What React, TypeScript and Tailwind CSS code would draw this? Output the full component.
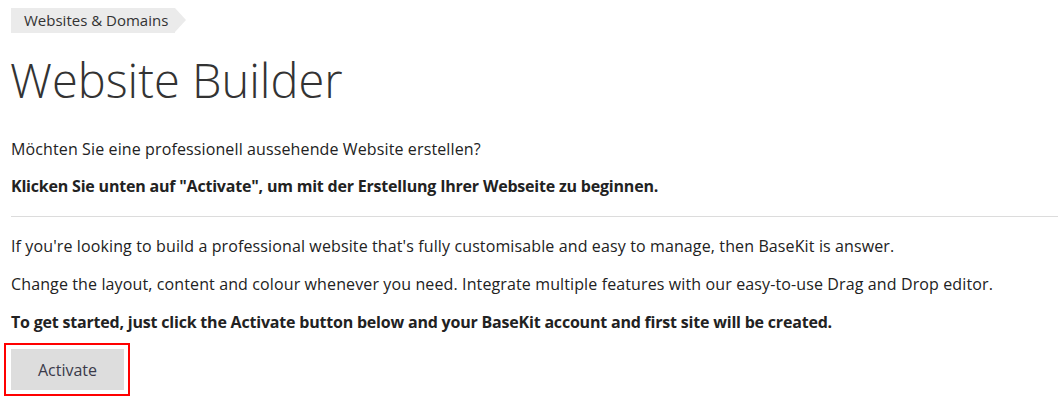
export default function App() {
    return (
        <div className="min-h-screen bg-white px-[11px] text-[16px] tracking-[0.12px] text-[#222] font-['Open_Sans',sans-serif]">
            {/* Breadcrumb */}
            <div className="pt-[8px] flex tracking-normal">
                <div className="flex h-[25px] items-center bg-[#ebebeb] pl-[13px] pr-[7px] text-[15px] text-[#333]">
                    Websites &amp; Domains
                </div>
                <div className="h-0 w-0 border-y-[12.5px] border-l-[11px] border-y-transparent border-l-[#ebebeb]" />
            </div>

            <h1 className="mt-[19px] text-[47px] leading-[56px] font-light tracking-normal text-[#333] -ml-[1px]">Website Builder</h1>

            <p className="mt-[31px] leading-[20px]">Möchten Sie eine professionell aussehende Website erstellen?</p>
            <p className="mt-[17px] leading-[20px] font-bold tracking-[-0.2px]">
                Klicken Sie unten auf "Activate", um mit der Erstellung Ihrer Webseite zu beginnen.
            </p>

            <hr className="mt-[20px] border-t border-[#dcdcdc] -mr-[11px]" />

            <p className="mt-[19px] leading-[20px]">
                If you're looking to build a professional website that's fully customisable and easy to manage, then BaseKit is answer.
            </p>
            <p className="mt-[18px] leading-[20px]">
                Change the layout, content and colour whenever you need. Integrate multiple features with our easy-to-use Drag and Drop editor.
            </p>
            <p className="mt-[18px] leading-[20px] font-bold tracking-[-0.2px]">
                To get started, just click the Activate button below and your BaseKit account and first site will be created.
            </p>

            <div className="mt-[11px] -ml-[7px] inline-flex border-2 border-[#ff0000] pl-[5px] pr-[4px] py-[4px]">
                <button className="h-[41px] w-[113px] bg-[#dddddd] text-[16px] tracking-normal text-[#3a3a4a]">Activate</button>
            </div>
        </div>
    )
}
